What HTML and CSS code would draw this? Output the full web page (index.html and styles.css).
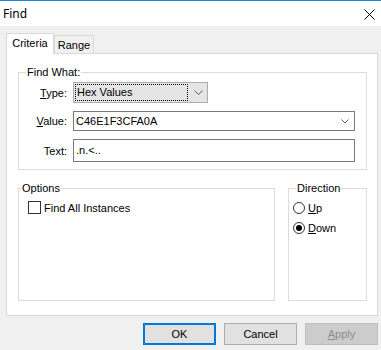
FILE: index.html
```html
<!DOCTYPE html>
<html lang="en">
<head>
  <meta charset="UTF-8" />
  <title>Find</title>
  <link rel="stylesheet" href="styles.css">
</head>
<body>
  <div class="window">
    <div class="titlebar">
      <span class="title">Find</span>
      <svg class="close" width="11" height="11" viewBox="0 0 11 11">
        <path d="M0.5 0.5 L10.5 10.5 M10.5 0.5 L0.5 10.5" stroke="#000" stroke-width="1" fill="none"/>
      </svg>
    </div>
    <div class="content">
      <div class="tabs">
        <div class="tab active">Criteria</div>
        <div class="tab range">Range</div>
      </div>
      <div class="page">
        <fieldset class="group find-what">
          <legend>Find What:</legend>
          <div class="form">
            <label><u>T</u>ype:</label>
            <div class="dropdown">
              <span class="focus">Hex Values</span>
              <svg width="9" height="5" viewBox="0 0 9 5"><polyline points="0.5,0.5 4.5,4.5 8.5,0.5" fill="none" stroke="#606060"/></svg>
            </div>
            <label><u>V</u>alue:</label>
            <div class="combo">
              <span>C46E1F3CFA0A</span>
              <svg width="8" height="5" viewBox="0 0 8 5"><polyline points="0.5,0.5 4,4 7.5,0.5" fill="none" stroke="#606060"/></svg>
            </div>
            <label>Text:</label>
            <div class="textbox">.n.&lt;..</div>
          </div>
        </fieldset>

        <div class="lower">
          <fieldset class="group options">
            <legend>Options</legend>
            <div class="options-body">
              <div class="check"><span class="box"></span><span>Find All Instances</span></div>
            </div>
          </fieldset>
          <fieldset class="group direction">
            <legend>Direction</legend>
            <div class="direction-body">
              <div class="radio"><span class="circle"></span><span><u>U</u>p</span></div>
              <div class="radio"><span class="circle checked"></span><span><u>D</u>own</span></div>
            </div>
          </fieldset>
        </div>
      </div>

      <div class="buttons">
        <button class="default">OK</button>
        <button>Cancel</button>
        <button class="disabled"><u>A</u>pply</button>
      </div>
    </div>
  </div>
</body>
</html>
```

FILE: styles.css
```css
* {
  box-sizing: border-box;
}

body {
  margin: 0;
  font-family: "Liberation Sans", Arial, sans-serif;
  font-size: 11px;
  color: #000;
}

.window {
  width: 381px;
  height: 350px;
  background-color: #f0f0f0;
  overflow: hidden;
}

.titlebar {
  height: 26px;
  border-top: 1px solid #1883d7;
  background-color: #fff;
  display: flex;
  align-items: center;
  justify-content: space-between;
  padding: 0 6px 0 3px;
}

.title {
  font-family: "Noto Sans", sans-serif;
  font-size: 12px;
  line-height: 16px;
}

.close {
  margin-top: 2px;
}

.content {
  padding: 7px 3px 0 6px;
}

.tabs {
  display: flex;
  align-items: flex-end;
  height: 21px;
  border-bottom: 1px solid #d9d9d9;
}

.tab {
  border: 1px solid #d9d9d9;
  border-bottom: none;
  text-align: center;
}

.tab.active {
  width: 48px;
  height: 21px;
  margin-bottom: -1px;
  background-color: #fff;
  line-height: 19px;
}

.tab.range {
  width: 40px;
  height: 18px;
  line-height: 18px;
}

.page {
  height: 262px;
  background-color: #fff;
  border: 1px solid #d9d9d9;
  border-top: none;
  padding: 0 10px 0 11px;
  overflow: hidden;
}

.group {
  margin: 0;
  padding: 0;
  border: 1px solid #dcdcdc;
  min-width: 0;
}

.group legend {
  padding: 0 1px;
  line-height: 13px;
}

.find-what {
  margin-top: 12px;
}

.find-what legend {
  margin-left: 7px;
}

.form {
  display: grid;
  grid-template-columns: 48px 1fr;
  grid-template-rows: 21px 20px 23px;
  column-gap: 6px;
  row-gap: 8px;
  padding: 3px 11px 7px 0;
  align-items: center;
}

.form label {
  text-align: right;
}

.dropdown {
  width: 135px;
  height: 21px;
  background-color: #e5e5e5;
  border: 1px solid #adadad;
  display: flex;
  align-items: center;
  padding-left: 1px;
}

.dropdown .focus {
  width: 113px;
  height: 17px;
  border: 1px dotted #000;
  line-height: 15px;
  padding-left: 1px;
}

.dropdown svg {
  margin-left: 6px;
}

.combo {
  height: 20px;
  border: 1px solid #7a7a7a;
  display: flex;
  align-items: center;
  justify-content: space-between;
  padding: 0 5px 0 2px;
}

.textbox {
  height: 23px;
  border: 1px solid #7a7a7a;
  line-height: 21px;
  padding-left: 2px;
}

.lower {
  display: flex;
  gap: 13px;
  height: 119px;
  margin-top: 12px;
}

.options {
  width: 257px;
}

.options legend {
  margin-left: 2px;
}

.options-body {
  padding: 6px 0 0 9px;
}

.direction {
  width: 79px;
}

.direction legend {
  margin-left: 7px;
}

.direction-body {
  display: flex;
  flex-direction: column;
  gap: 7px;
  padding: 6px 0 0 4px;
}

.check,
.radio {
  display: flex;
  align-items: center;
  height: 13px;
  gap: 3px;
}

.box {
  width: 13px;
  height: 13px;
  border: 1px solid #333;
  background-color: #fff;
}

.circle {
  width: 12px;
  height: 12px;
  border: 1px solid #333;
  border-radius: 50%;
  display: flex;
  align-items: center;
  justify-content: center;
}

.circle.checked::after {
  content: "";
  width: 6px;
  height: 6px;
  border-radius: 50%;
  background-color: #000;
}

.buttons {
  display: flex;
  justify-content: flex-end;
  gap: 8px;
  margin-top: 7px;
}

button {
  width: 73px;
  height: 22px;
  font-family: "Liberation Sans", Arial, sans-serif;
  font-size: 11px;
  color: #000;
  background-color: #e1e1e1;
  border: 1px solid #adadad;
  padding: 0;
}

button.default {
  border: 2px solid #0078d7;
}

button.disabled {
  background-color: #cccccc;
  border-color: #bfbfbf;
  color: #8c8c8c;
}
```
